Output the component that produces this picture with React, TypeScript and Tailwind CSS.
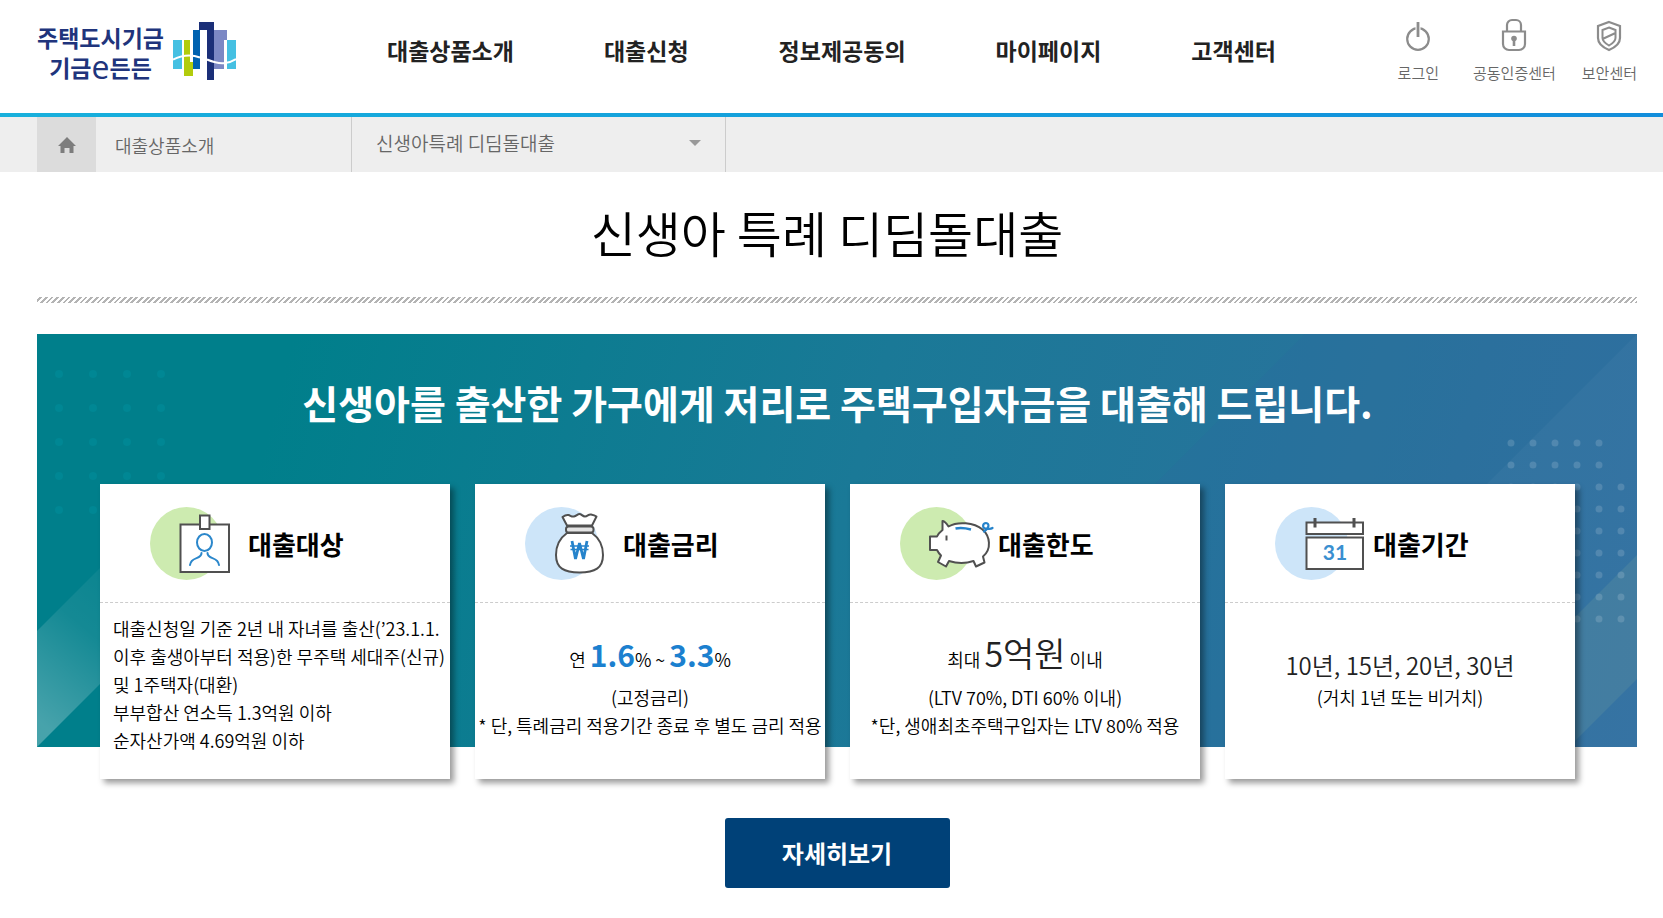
import type { ReactNode } from 'react'

const menus = ['대출상품소개', '대출신청', '정보제공동의', '마이페이지', '고객센터']

const leftDots = { xs: [22, 56, 90, 124], ys: [40, 74, 108, 142, 176] }
const rightDots = { xs: [6, 28, 50, 72, 94, 116], ys: [0, 22, 44, 66, 88, 110, 132, 154, 176] }

function LogoMark() {
  return (
    <svg width="63" height="58" viewBox="0 0 63 58" aria-hidden="true">
      <path fill="#45c0e2" d="M0 18h9v29H0zM54 18h9v29h-9z" />
      <path fill="#b2cc0c" d="M11 18h6v22h3v14h-9z" />
      <path fill="#0062b0" d="M20 8h7v39h-7z" />
      <path fill="#7c88c4" d="M41 8h13v10h-3v29H41z" />
      <path fill="#1b2f78" d="M26 0h15v58h-7V8h-8z" />
      <path fill="none" stroke="#fff" strokeWidth="2" d="M0 37.500C8 33.500 18 32 27 35.500M34 37.500C40 40 46 42 52 41s8-2 11-4" />
    </svg>
  )
}

function PowerIcon() {
  return (
    <svg width="26" height="34" viewBox="0 0 26 34" fill="none" stroke="#8c8c8c" strokeWidth="2.200" aria-hidden="true">
      <circle cx="13" cy="21" r="10.800" />
      <path stroke="#fff" strokeWidth="5" d="M13 5v8" />
      <path strokeWidth="2.800" d="M13 4v15" />
    </svg>
  )
}

function LockIcon() {
  return (
    <svg width="26" height="34" viewBox="0 0 26 34" fill="none" stroke="#8c8c8c" strokeWidth="2.200" aria-hidden="true">
      <path d="M2 13.500h22V26a6 6 0 0 1-6 6H8a6 6 0 0 1-6-6zM6 13V7a5 5 0 0 1 5-5h4a5 5 0 0 1 5 5v6" />
      <circle cx="13" cy="20.500" r="2.800" fill="#8c8c8c" stroke="none" />
      <path strokeWidth="2.600" d="M13 20v8" />
    </svg>
  )
}

function ShieldIcon() {
  return (
    <svg width="26" height="34" viewBox="0 0 26 34" fill="none" stroke="#8c8c8c" strokeWidth="2.200" aria-hidden="true">
      <path d="M13 4 24 8v12c0 6-5 9.500-11 12C7 29.500 2 26 2 20V8z" />
      <path strokeWidth="2" d="M13 9.500 19.500 12v8c0 3.500-3 5.500-6.500 7.500-3.500-2-6.500-4-6.500-7.500v-8zM6.500 21l13-6" />
    </svg>
  )
}

function CardIcon({ tint, children }: { tint: string; children: ReactNode }) {
  return (
    <svg width="98" height="76" viewBox="0 -2 98 76" fill="none" aria-hidden="true" className="shrink-0">
      <circle cx="36.500" cy="36.500" r="36.500" fill={tint} />
      {children}
    </svg>
  )
}

function BadgeIcon() {
  return (
    <CardIcon tint="#cdebb0">
      <g fill="#fff" stroke="#505050" strokeWidth="2">
        <path d="M30.500 17.500h48.500v47.500H30.500z" />
        <path d="M50 8.500h9.500V22H50z" />
      </g>
      <g stroke="#2b87cb" strokeWidth="2" strokeLinecap="round">
        <ellipse cx="54.500" cy="35.500" rx="7.500" ry="8.500" />
        <path d="M51.500 46c0 7-10.500 3-11.500 12M57.500 46c0 7 10.500 3 11.500 12" />
      </g>
    </CardIcon>
  )
}

function MoneyBagIcon() {
  return (
    <CardIcon tint="#cde5f9">
      <g fill="#fff" stroke="#505050" strokeWidth="2" strokeLinejoin="round">
        <path d="M42 18.500 37.500 10c2-1.500 4-2.500 6-2s3 2 5.500 1.500S52.500 7 54.500 7s3 2.500 5.500 2.500S63.500 7 66 7.500s4 1 5.500 2L67 18.500z" />
        <path d="M42 26c-7 5-11 13-11 22 0 13 8 17.500 23.500 17.500S78 61 78 48c0-9-4-17-11-22z" />
        <rect x="41" y="19.500" width="27.500" height="6" rx="2.500" fill="#e4e4e4" />
      </g>
      <path stroke="#2583cb" strokeWidth="2.800" d="M47 34l3.500 18L54.500 36l4 16L62 34" />
      <path stroke="#2583cb" strokeWidth="1.600" d="M45 39h19M45.500 42.500h18" />
    </CardIcon>
  )
}

function PiggyIcon() {
  return (
    <CardIcon tint="#cdebb0">
      <path
        fill="#fff"
        stroke="#505050"
        strokeWidth="2"
        strokeLinejoin="round"
        d="M48.500 19.500C46.500 16.500 44.500 14 42.500 14v9C40 25 38 27 37 29.500h-7V43h7c1 2 2.500 4 4 5.500L38 55l8 4.500 3-5.500c8 2.500 17 2.500 24.500 0l2.500 5.500 8.500-4-1.500-6C92 42 90 29 82.500 22.500 74 15.500 58 14 48.500 19.500z"
      />
      <path stroke="#505050" strokeWidth="2" d="M46.500 28.500v5" />
      <path stroke="#2583cb" strokeWidth="2.400" d="M55.500 21.500c5-1 10-.5 15.500 1" />
      <path stroke="#2583cb" strokeWidth="2.200" strokeLinecap="round" d="M84 24.500c5-3 6-8 2-8.500-3.500 0-4 5-.5 5.500s5 1 7-.5" />
    </CardIcon>
  )
}

function CalendarIcon() {
  return (
    <CardIcon tint="#cde5f9">
      <path fill="#fff" stroke="#505050" strokeWidth="2" d="M31.500 15.500H88V27H31.500zM31.500 30.500H88V62H31.500z" />
      <path stroke="#505050" strokeWidth="3" d="M40 11v9.500M79 11v9.500" />
      <text x="60" y="52.500" textAnchor="middle" fill="#3a8fd0" className="font-['Lato',sans-serif] text-[21px] font-bold">31</text>
    </CardIcon>
  )
}

const utils = [
  { label: '로그인', icon: <PowerIcon /> },
  { label: '공동인증센터', icon: <LockIcon /> },
  { label: '보안센터', icon: <ShieldIcon /> },
]

const cards = [
  {
    title: '대출대상',
    icon: <BadgeIcon />,
    body: (
      <div className="pl-[13px] pt-[11px]">
        <p>대출신청일 기준 2년 내 자녀를 출산(’23.1.1.<br />이후 출생아부터 적용)한 무주택 세대주(신규)<br />및 1주택자(대환)</p>
        <p>부부합산 연소득 1.3억원 이하</p>
        <p>순자산가액 4.69억원 이하</p>
      </div>
    ),
  },
  {
    title: '대출금리',
    icon: <MoneyBagIcon />,
    body: (
      <div className="pt-8 text-center">
        <p className="leading-[48px]">
          연 <strong className="text-[30px] font-bold leading-none text-[#1b80cf]">1.6</strong>% ~ <strong className="text-[30px] font-bold leading-none text-[#1b80cf]">3.3</strong>%
        </p>
        <p>(고정금리)</p>
        <p>* 단, 특례금리 적용기간 종료 후 별도 금리 적용</p>
      </div>
    ),
  },
  {
    title: '대출한도',
    icon: <PiggyIcon />,
    body: (
      <div className="pt-8 text-center">
        <p className="leading-[48px]">최대 <span className="text-[34px] leading-none text-[#222]">5억원</span> 이내</p>
        <p>(LTV 70%, DTI 60% 이내)</p>
        <p>*단, 생애최초주택구입자는 LTV 80% 적용</p>
      </div>
    ),
  },
  {
    title: '대출기간',
    icon: <CalendarIcon />,
    body: (
      <div className="pt-11 text-center">
        <p className="text-[24px] leading-9 text-[#222]">10년, 15년, 20년, 30년</p>
        <p>(거치 1년 또는 비거치)</p>
      </div>
    ),
  },
]

function Header() {
  return (
    <header className="bg-white">
      <div className="flex h-[113px] items-start justify-between pl-[37px] pr-[26px]">
        <div className="flex items-start">
          <a href="#" className="flex items-start gap-[9px] pt-[22px] text-[#20347c]">
            <span className="flex flex-col items-center text-[23px] font-bold leading-[30px]">
              <span>주택도시기금</span>
              <span className="flex items-center">기금<span className="font-['Open_Sans',sans-serif] text-[32px] font-medium">e</span>든든</span>
            </span>
            <LogoMark />
          </a>
          <nav className="ml-[151px] flex gap-[90px] pt-[33px]">
            {menus.map((menu) => (
              <a key={menu} href="#" className="whitespace-nowrap text-[23px] font-bold leading-[34px] text-[#222]">{menu}</a>
            ))}
          </nav>
        </div>
        <ul className="flex gap-[26px] pt-[18px]">
          {utils.map((util) => (
            <li key={util.label} className="first:mr-2">
              <a href="#" className="flex flex-col items-center gap-[9px] whitespace-nowrap text-[15px] font-[350] leading-6 text-[#666]">
                {util.icon}
                {util.label}
              </a>
            </li>
          ))}
        </ul>
      </div>
      <div className="h-1 bg-linear-to-r from-[#18b0dc] to-[#128ddb]" />
    </header>
  )
}

function Breadcrumb() {
  return (
    <nav className="flex h-[55px] bg-[#eee] pl-[37px] font-[350] text-[#666]" aria-label="breadcrumb">
      <a href="#" aria-label="홈" className="flex w-[59px] items-center justify-center bg-[#dcdcdc]">
        <svg width="18" height="16" viewBox="0 0 18 16" fill="#7d7d7d" aria-hidden="true">
          <path d="M9 0l9 9h-2.500v7h-4v-5h-5v5h-4V9H0z" />
        </svg>
      </a>
      <a href="#" className="flex w-64 items-center border-r border-[#ccc] pl-[19px] pt-0.5 text-[18px]">대출상품소개</a>
      <div className="relative w-[374px] border-r border-[#ccc]">
        <select aria-label="대출상품" className="h-full w-full appearance-none bg-transparent pb-0.5 pl-6 pr-10 text-[19px]">
          <option>신생아특례 디딤돌대출</option>
        </select>
        <svg width="12" height="6" viewBox="0 0 12 6" fill="#999" className="pointer-events-none absolute right-6 top-[23px]" aria-hidden="true">
          <path d="M0 0h12L6 6z" />
        </svg>
      </div>
    </nav>
  )
}

function BannerArt() {
  return (
    <>
      <svg width="160" height="413" viewBox="0 0 160 413" className="absolute left-0 top-0" aria-hidden="true">
        <defs>
          <linearGradient id="fadeLeft" x1="0.700" y1="0" x2="0.300" y2="1">
            <stop offset="0" stopColor="#fff" stopOpacity="0.020" />
            <stop offset="0.500" stopColor="#fff" stopOpacity="0.080" />
            <stop offset="1" stopColor="#fff" stopOpacity="0.280" />
          </linearGradient>
        </defs>
        {leftDots.ys.map((y) => leftDots.xs.map((x) => <circle key={`${x}-${y}`} cx={x} cy={y} r="4" fill="#008794" />))}
        <path fill="url(#fadeLeft)" d="M110 187v116L0 413V297z" />
      </svg>
      <svg width="700" height="413" viewBox="0 0 700 413" className="absolute right-0 top-0" aria-hidden="true">
        <path fill="#2f689f" fillOpacity="0.200" d="M368 0h332v413H0v-45z" />
        <path fill="#fff" fillOpacity="0.030" d="M700 0v413H287z" />
        <path fill="#8fb39a" fillOpacity="0.160" d="M700 221v124l-68 68H508z" />
        <g transform="translate(568 109)" fill="#fff" fillOpacity="0.150">
          {rightDots.ys.map((y, row) =>
            rightDots.xs.slice(0, row < 2 ? 5 : 6).map((x) => <circle key={`${x}-${y}`} cx={x} cy={y} r="3.500" />)
          )}
        </g>
      </svg>
    </>
  )
}

export default function App() {
  return (
    <div className="min-h-screen bg-white pb-[30px] font-['Noto_Sans_CJK_KR',sans-serif] text-black">
      <Header />
      <Breadcrumb />
      <main className="pl-[37px] pr-[26px]">
        <h1 className="pr-5 pt-6 text-center text-[49px] font-[350] leading-[72px]">신생아 특례 디딤돌대출</h1>
        <div className="mt-[29px] h-1.5 bg-[repeating-linear-gradient(135deg,#fff_0px,#fff_2px,#b4b4b4_2px,#b4b4b4_4px)]" />

        <section className="relative mt-[31px]">
          <div className="absolute inset-x-0 top-0 h-[413px] overflow-hidden bg-[linear-gradient(105deg,#007f8b_0%,#007f8b_15%,#1a7997_50%,#2b729d_85%,#3171a0_100%)]">
            <BannerArt />
          </div>
          <div className="relative pl-[63px] pr-[62px] pt-[38px]">
            <h2 className="text-center text-[39px] font-bold leading-[60px] text-white">신생아를 출산한 가구에게 저리로 주택구입자금을 대출해 드립니다.</h2>
            <div className="mt-[52px] grid grid-cols-4 gap-[25px]">
              {cards.map((card) => (
                <article key={card.title} className="h-[295px] bg-white shadow-[4px_4px_6px_rgba(0,0,0,0.4)]">
                  <div className="flex h-[119px] items-center border-b border-dashed border-[#ccc] pl-[50px]">
                    {card.icon}
                    <h3 className="whitespace-nowrap text-[26px] font-bold">{card.title}</h3>
                  </div>
                  <div className="whitespace-nowrap text-[18px] font-[350] leading-7">{card.body}</div>
                </article>
              ))}
            </div>
          </div>
        </section>

        <div className="mt-[39px] flex justify-center">
          <button type="button" className="h-[70px] w-[225px] rounded-[3px] bg-[#004178] text-[24px] font-bold text-white">자세히보기</button>
        </div>
      </main>
    </div>
  )
}
